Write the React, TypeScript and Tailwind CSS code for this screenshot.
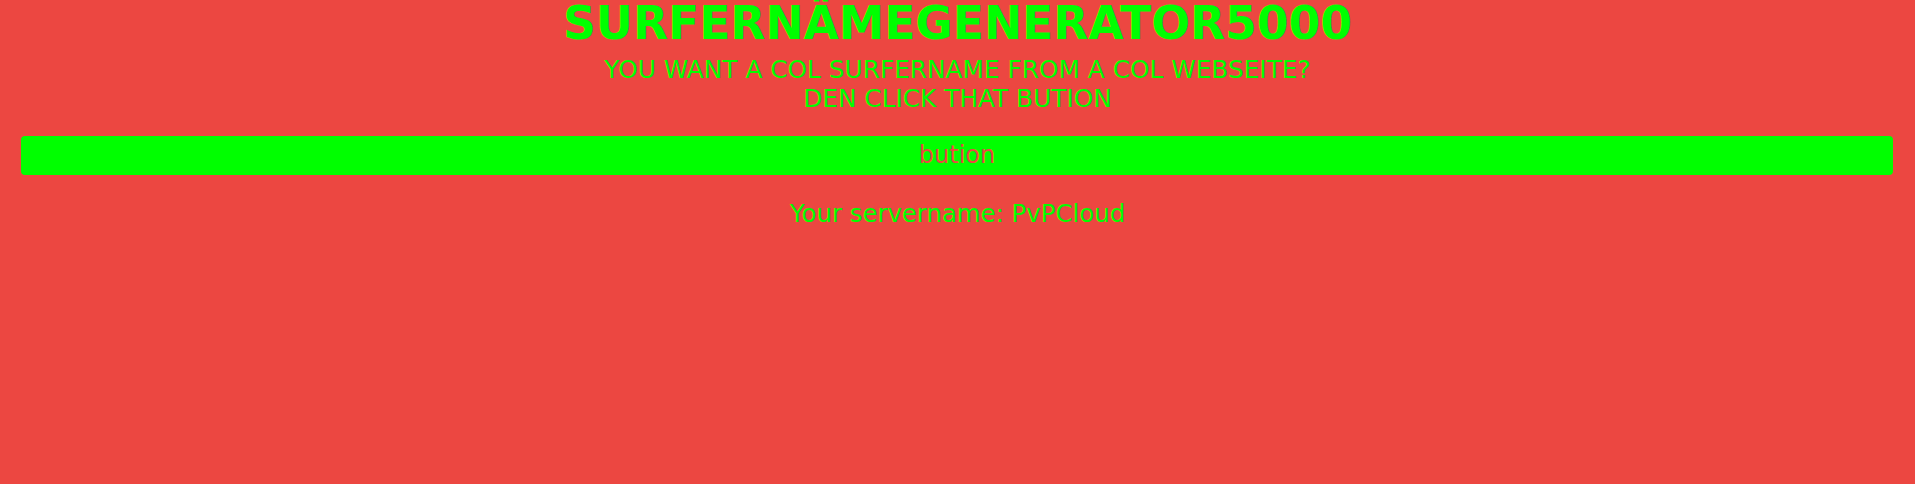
import React from "react";

export default function App() {
  const font = { fontFamily: '"DejaVu Sans", sans-serif' };
  return (
    <div className="min-h-[484px] w-full bg-[#ec4741] text-[#00ff00]" style={font}>
      <h1 className="m-0 text-center text-[45.6px] font-bold leading-[48px]">SURFERNÄMEGENERATOR5000</h1>
      <div className="mt-[7px] text-center text-[24.8px] leading-[29px]">
        <p>YOU WANT A COL SURFERNAME FROM A COL WEBSEITE?</p>
        <p>DEN CLICK THAT BUTION</p>
      </div>
      <div className="ml-[21px] mr-[22px] mt-[23px]">
        <button className="block h-[39px] w-full rounded-[4px] bg-[#00ff00] text-center text-[24px] leading-[39px] text-[#ec4741]">
          bution
        </button>
      </div>
      <p className="mt-[25px] text-center text-[24.4px] leading-[28px]">Your servername: PvPCloud</p>
    </div>
  );
}
